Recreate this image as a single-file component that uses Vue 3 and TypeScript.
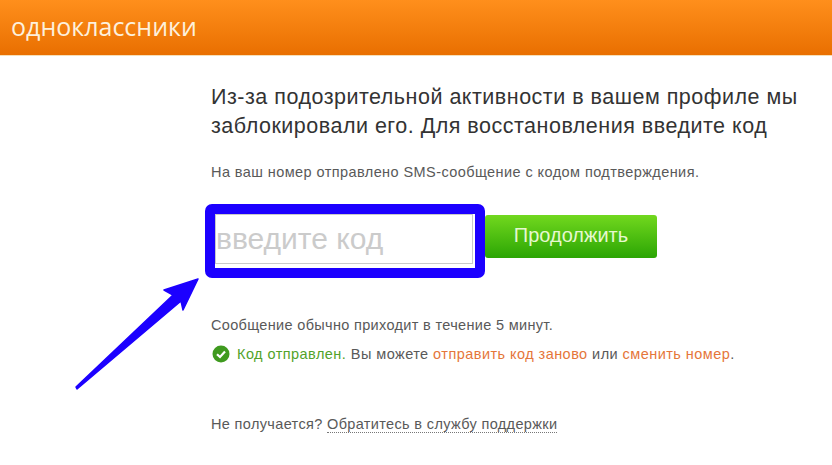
<script setup lang="ts">
import { ref } from 'vue';

const code = ref('');
</script>

<template>
  <div class="page">
    <header class="top-bar">
      <span class="logo">одноклассники</span>
    </header>
    <main class="content">
      <h1 class="title">
        Из-за подозрительной активности в вашем профиле мы<br />
        заблокировали его. Для восстановления введите код
      </h1>
      <p class="sent-note">На ваш номер отправлено SMS-сообщение с кодом подтверждения.</p>
      <div class="code-row">
        <div class="code-box">
          <input v-model="code" class="code-input" type="text" placeholder="введите код" />
          <div class="highlight"></div>
          <svg class="arrow" width="130" height="120" viewBox="0 0 130 120">
            <polygon points="127,4 93,15 102,20 5,112 6,114 110,26 112,35" fill="#1c00ff" stroke="#1c00ff" stroke-width="1.5" stroke-linejoin="round" />
          </svg>
        </div>
        <button class="continue-btn" type="button">Продолжить</button>
      </div>
      <p class="hint">Сообщение обычно приходит в течение 5 минут.</p>
      <div class="status">
        <svg class="check" width="18" height="18" viewBox="0 0 18 18">
          <circle cx="9" cy="9" r="8.5" fill="#3f9a1f" />
          <path d="M5 9.2 L8 12 L13 6.6" fill="none" stroke="#fff" stroke-width="2.2" />
        </svg>
        <span><span class="ok">Код отправлен.</span> Вы можете <a class="link">отправить код заново</a> или <a class="link">сменить номер</a>.</span>
      </div>
      <p class="support">Не получается? <a class="support-link">Обратитесь в службу поддержки</a></p>
    </main>
  </div>
</template>

<style>
html,
body {
  background: #fff;
}
</style>

<style scoped>
.page {
  width: 832px;
  height: 465px;
  overflow: hidden;
  font-family: "Liberation Sans", Arial, sans-serif;
  color: #595959;
}

.top-bar {
  height: 56px;
  display: flex;
  align-items: center;
  padding-left: 11px;
  background: linear-gradient(#ff8f1c, #e96f00);
  border-bottom: 1px solid #f6dfb8;
  box-sizing: border-box;
}

.logo {
  font-family: "Open Sans", sans-serif;
  font-size: 25px;
  color: #fdf0dc;
  margin-top: -4px;
}

.content {
  padding-left: 211px;
  padding-top: 27px;
}

.title {
  margin: 0;
  font-size: 21.5px;
  letter-spacing: 0.5px;
  font-weight: normal;
  line-height: 29px;
  color: #333;
  white-space: nowrap;
}

.sent-note {
  margin: 23px 0 0;
  font-size: 14.5px;
  letter-spacing: 0.42px;
  line-height: 17px;
}

.code-row {
  display: flex;
  gap: 12px;
  margin-top: 33px;
  margin-left: 4px;
}

.code-box {
  position: relative;
  width: 258px;
  height: 50px;
}

.code-input {
  width: 100%;
  height: 100%;
  box-sizing: border-box;
  padding: 0;
  border: 1px solid #c9c9c9;
  outline: none;
  font-family: inherit;
  font-size: 30px;
}

.code-input::placeholder {
  color: #cbcbcb;
  opacity: 1;
}

.highlight {
  position: absolute;
  left: -10px;
  top: -10px;
  width: 260px;
  height: 54px;
  border: 10px solid #1c00ff;
  border-radius: 7px;
  pointer-events: none;
}

.arrow {
  position: absolute;
  left: -144px;
  top: 61px;
}

.continue-btn {
  width: 172px;
  height: 43px;
  padding: 0 0 3px;
  border: none;
  border-radius: 3px;
  background: linear-gradient(#72d81e, #2ba504);
  color: #e6f8cf;
  font-family: inherit;
  font-size: 20px;
  margin-top: 1px;
}

.hint {
  margin: 53px 0 0;
  font-size: 14.5px;
  letter-spacing: 0.33px;
  line-height: 17px;
}

.status {
  display: flex;
  align-items: center;
  gap: 7px;
  margin-top: 11px;
  margin-left: 1px;
  font-size: 14.5px;
  letter-spacing: 0.45px;
  line-height: 18px;
}

.ok {
  color: #52a32a;
}

.link {
  color: #e5763a;
}

.support {
  margin: 53px 0 0;
  font-size: 14.5px;
  letter-spacing: 0.35px;
  line-height: 17px;
}

.support-link {
  border-bottom: 1px dotted #777;
}
</style>
